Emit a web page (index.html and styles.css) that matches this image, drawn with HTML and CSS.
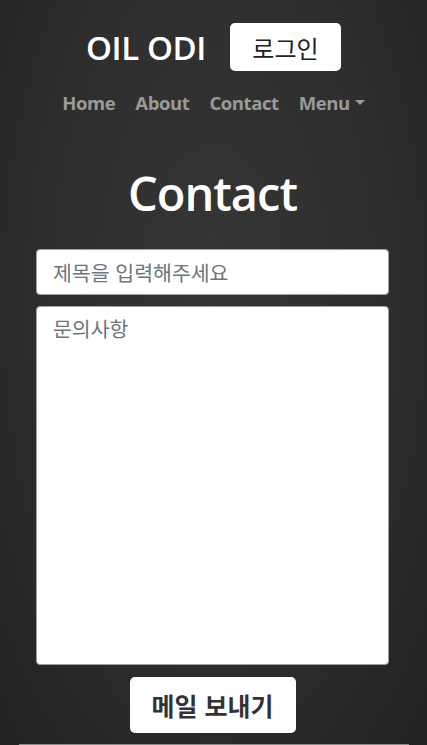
FILE: index.html
```html
<!DOCTYPE html>
<html lang="ko">
<head>
<meta charset="utf-8">
<title>Contact</title>
<link rel="stylesheet" href="styles.css">
</head>
<body>
<div class="page">
  <header class="header">
    <div class="brand-row">
      <span class="brand">OIL ODI</span>
      <button class="login-btn">로그인</button>
    </div>
    <nav class="nav">
      <a class="nav-link" href="#">Home</a>
      <a class="nav-link" href="#">About</a>
      <a class="nav-link" href="#">Contact</a>
      <a class="nav-link dropdown" href="#">Menu<span class="caret"></span></a>
    </nav>
  </header>
  <main class="main">
    <h1 class="title">Contact</h1>
    <form class="form">
      <input class="field" type="text" placeholder="제목을 입력해주세요">
      <textarea class="field area" placeholder="문의사항"></textarea>
      <button class="send-btn" type="button">메일 보내기</button>
    </form>
  </main>
  <div class="rule"></div>
</div>
</body>
</html>
```
FILE: styles.css
```css
* { box-sizing: border-box; }
html, body { margin: 0; padding: 0; height: 100%; }
body {
  background: radial-gradient(ellipse at 50% 40%, #363636 0%, #2e2e2e 55%, #222222 100%);
  font-family: "Open Sans", "Noto Sans CJK KR", sans-serif;
  color: #fff;
  overflow: hidden;
}
.page {
  height: 745px;
  display: flex;
  flex-direction: column;
  align-items: center;
}
.header {
  display: flex;
  flex-direction: column;
  align-items: center;
  padding-top: 23px;
}
.brand-row {
  display: flex;
  align-items: center;
  gap: 24px;
  height: 48px;
}
.brand {
  font-size: 33px;
  font-weight: 600;
  letter-spacing: -0.4px;
  color: #fff;
  line-height: 1;
}
.login-btn {
  width: 111px;
  height: 48px;
  background: #fff;
  border: none;
  border-radius: 5px;
  font-family: "Noto Sans CJK KR", sans-serif;
  font-size: 24px;
  font-weight: 400;
  color: #222;
  padding: 0;
}
.nav {
  display: flex;
  align-items: center;
  gap: 20px;
  margin-top: 19px;
  height: 24px;
}
.nav-link {
  color: #9a9a9a;
  font-weight: 700;
  font-size: 18.5px;
  letter-spacing: -0.4px;
  text-decoration: none;
  display: flex;
  align-items: center;
}
.caret {
  display: inline-block;
  margin-left: 5px;
  margin-top: 1px;
  border-left: 5.5px solid transparent;
  border-right: 5.5px solid transparent;
  border-top: 5.5px solid #9a9a9a;
}
.main {
  width: 100%;
  padding: 0 38px 0 36px;
  display: flex;
  flex-direction: column;
  align-items: center;
}
.title {
  margin: 47px 0 0;
  font-size: 47px;
  font-weight: 600;
  letter-spacing: -1px;
  line-height: 64px;
  color: #fff;
}
.form {
  width: 100%;
  display: flex;
  flex-direction: column;
  align-items: center;
  margin-top: 24px;
}
.field {
  width: 100%;
  background: #fff;
  border: 1px solid #9aa0a6;
  border-radius: 4px;
  font-family: "Noto Sans CJK KR", sans-serif;
  font-size: 20.5px;
  color: #333;
  padding: 6px 16px;
  outline: none;
}
.field::placeholder { color: #6c757d; }
input.field { height: 46px; }
.area {
  margin-top: 11px;
  height: 359px;
  resize: none;
  padding-top: 6px;
}
.send-btn {
  margin-top: 12px;
  width: 166px;
  height: 56px;
  background: #fff;
  border: none;
  border-radius: 5px;
  font-family: "Noto Sans CJK KR", sans-serif;
  font-size: 25px;
  font-weight: 700;
  color: #333;
}
.rule {
  margin-top: auto;
  width: 390px;
  height: 1px;
  background: #8a8a8a;
  margin-left: 1px;
}
```
